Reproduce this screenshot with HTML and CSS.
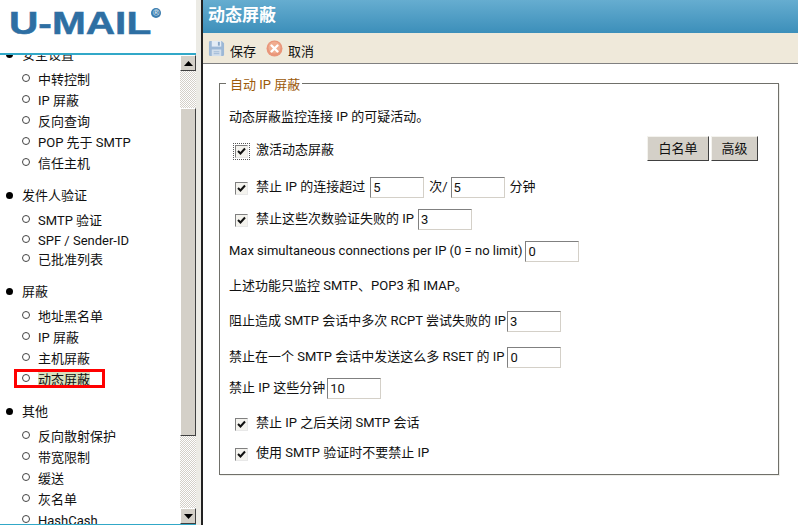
FILE: index.html
```html
<!DOCTYPE html>
<html lang="zh">
<head>
<meta charset="utf-8">
<title>动态屏蔽</title>
<link rel="stylesheet" href="styles.css">
</head>
<body>
<div class="app">
  <aside class="side">
    <div class="brand"><span class="logo">U-MAIL</span><span class="reg">®</span></div>
    <div class="navwrap">
      <div class="nav">
        <ul class="groups">
          <li class="group"><span class="gt">安全设置</span>
            <ul class="items">
              <li>中转控制</li><li>IP 屏蔽</li><li>反向查询</li><li>POP 先于 SMTP</li><li>信任主机</li>
            </ul>
          </li>
          <li class="group"><span class="gt">发件人验证</span>
            <ul class="items i20">
              <li>SMTP 验证</li><li>SPF / Sender-ID</li><li>已批准列表</li>
            </ul>
          </li>
          <li class="group"><span class="gt">屏蔽</span>
            <ul class="items">
              <li>地址黑名单</li><li>IP 屏蔽</li><li>主机屏蔽</li><li class="active"><span class="sel">动态屏蔽</span></li>
            </ul>
          </li>
          <li class="group"><span class="gt">其他</span>
            <ul class="items">
              <li>反向散射保护</li><li>带宽限制</li><li>缓送</li><li>灰名单</li><li>HashCash</li>
            </ul>
          </li>
        </ul>
      </div>
      <div class="sbar">
        <div class="sbtn"><svg width="9" height="5" viewBox="0 0 9 5"><path d="M4.500 0 9 5H0z"/></svg></div>
        <div class="strack t1"></div>
        <div class="sthumb"></div>
        <div class="strack t2"></div>
        <div class="sbtn"><svg width="9" height="5" viewBox="0 0 9 5"><path d="M0 0h9L4.500 5z"/></svg></div>
      </div>
    </div>
  </aside>
  <div class="split"></div>
  <main class="main">
    <header class="head">动态屏蔽</header>
    <div class="tools">
      <span class="tool"><svg class="ico" width="17" height="17" viewBox="0 0 18 18"><path d="M1 2.500A1.500 1.500 0 0 1 2.500 1h12L17 3.500v12a1.500 1.500 0 0 1-1.500 1.500h-13A1.500 1.500 0 0 1 1 15.500z" fill="#9db8d6"/><rect x="4" y="1" width="10" height="6" fill="#e4ecf5"/><rect x="10.500" y="2" width="2" height="4" fill="#8aa7c8"/><rect x="4" y="10" width="10" height="7" fill="#d3dfec"/><rect x="6" y="12" width="6" height="1" fill="#9db8d6"/><rect x="6" y="14" width="6" height="1" fill="#9db8d6"/></svg>保存</span>
      <span class="tool t2"><svg class="ico" width="17" height="17" viewBox="0 0 17 17"><circle cx="8.500" cy="8.500" r="8" fill="#e9967a"/><circle cx="8.500" cy="7.500" r="6" fill="#f0ad90"/><path d="M5.500 5.500l6 6M11.500 5.500l-6 6" stroke="#fff" stroke-width="2.400" stroke-linecap="round"/></svg>取消</span>
    </div>
    <div class="body">
      <fieldset class="box">
        <legend>自动 IP 屏蔽</legend>
        <p class="line intro">动态屏蔽监控连接 IP 的可疑活动。</p>
        <div class="line act">
          <label class="chk"><span class="cb focus"><svg width="9" height="9" viewBox="0 0 9 9"><path d="M1 4l2.500 2.500L8 1.500" fill="none" stroke="#111" stroke-width="2"/></svg></span>激活动态屏蔽</label>
          <span class="btns"><span class="btn b1">白名单</span><span class="btn b2">高级</span></span>
        </div>
        <div class="line l3"><label class="chk"><span class="cb"><svg width="9" height="9" viewBox="0 0 9 9"><path d="M1 4l2.500 2.500L8 1.500" fill="none" stroke="#111" stroke-width="2"/></svg></span>禁止 IP 的连接超过</label><span class="inp m5">5</span><span class="gap1">次/</span><span class="inp">5</span><span class="gap2">分钟</span></div>
        <div class="line l4"><label class="chk"><span class="cb"><svg width="9" height="9" viewBox="0 0 9 9"><path d="M1 4l2.500 2.500L8 1.500" fill="none" stroke="#111" stroke-width="2"/></svg></span>禁止这些次数验证失败的 IP</label><span class="inp m4">3</span></div>
        <div class="line l5">Max simultaneous connections per IP (0 = no limit)<span class="inp">0</span></div>
        <p class="line l6">上述功能只监控 SMTP、POP3 和 IMAP。</p>
        <div class="line l7">阻止造成 SMTP 会话中多次 RCPT 尝试失败的 IP<span class="inp m1">3</span></div>
        <div class="line l8">禁止在一个 SMTP 会话中发送这么多 RSET 的 IP<span class="inp">0</span></div>
        <div class="line l9">禁止 IP 这些分钟<span class="inp m2">10</span></div>
        <div class="line l10"><label class="chk"><span class="cb"><svg width="9" height="9" viewBox="0 0 9 9"><path d="M1 4l2.500 2.500L8 1.500" fill="none" stroke="#111" stroke-width="2"/></svg></span>禁止 IP 之后关闭 SMTP 会话</label></div>
        <div class="line l11"><label class="chk"><span class="cb"><svg width="9" height="9" viewBox="0 0 9 9"><path d="M1 4l2.500 2.500L8 1.500" fill="none" stroke="#111" stroke-width="2"/></svg></span>使用 SMTP 验证时不要禁止 IP</label></div>
      </fieldset>
    </div>
  </main>
</div>
</body>
</html>
```
FILE: styles.css
```css
*, *::before, *::after { box-sizing: border-box; }
html, body { margin: 0; height: 100%; overflow: hidden; background: #fff; }
body { font: 13px/16px Roboto, "Noto Sans CJK SC", sans-serif; color: #111; }
ul { list-style: none; margin: 0; padding: 0; }
p { margin: 0; }
.app { display: flex; width: 798px; height: 525px; }

.side { width: 196px; height: 525px; display: flex; flex-direction: column; flex: none; }
.brand { height: 55px; border-bottom: 2px solid #31a8c8; padding: 7px 0 0 9px; display: flex; align-items: flex-start; flex: none; background: #fff; position: relative; z-index: 1; }
.logo { font: bold 32px/32px "Liberation Sans", sans-serif; color: #2e6fa3; -webkit-text-stroke: 0.500px #2e6fa3; transform: scaleX(1.27); transform-origin: left; }
.reg { width: 10px; height: 10px; margin: 1px 0 0 30px; border-radius: 50%; background: #3b7cae; color: #d5e4ef; font: bold 9px/10px "Liberation Sans", sans-serif; text-align: center; }
.navwrap { flex: 1; display: flex; min-height: 0; border-bottom: 1px solid #31a8c8; }
.nav { flex: 1; overflow: hidden; background: #fff; }
.groups { margin-top: -8px; }
.group { padding-left: 22px; position: relative; margin-bottom: 11px; }
.group::before { content: ""; position: absolute; left: 6px; top: 4px; width: 7px; height: 7px; border-radius: 50%; background: #000; }
.gt { display: block; height: 16px; }
.items { margin-top: 9px; padding-left: 16px; }
.items li { height: 21px; position: relative; white-space: nowrap; }
.i20 { margin-bottom: 12.500px; }
.i20 li { height: 19.500px; }
.items li::before { content: ""; position: absolute; left: -16px; top: 2px; width: 8px; height: 8px; border: 1.500px solid #444; border-radius: 50%; background: #fff; }
.active::after { content: ""; position: absolute; left: -24px; top: -3px; width: 91px; height: 19px; border: 3px solid #f00; }
.sel { background: #d8e2c0; }

.sbar { width: 16px; flex: none; display: flex; flex-direction: column; background: #fff; }
.sbtn { height: 16px; background: #d4d0c8; border: 1px solid; border-color: #fff #404040 #404040 #fff; display: flex; align-items: center; justify-content: center; flex: none; }
.strack { background: repeating-conic-gradient(#d4d0c8 0 25%, #fff 0 50%) 0 0/2px 2px; }
.t1 { height: 37px; flex: none; }
.t2 { flex: 1; }
.sthumb { height: 328px; flex: none; background: #d4d0c8; border: 1px solid; border-color: #fff #404040 #404040 #fff; }

.split { width: 7px; flex: none; background: #ecebe5; border-right: 2px solid #222; }

.main { flex: 1; display: flex; flex-direction: column; min-width: 0; }
.head { height: 33px; background: linear-gradient(#66add0, #3c8fba); color: #fff; font-size: 17px; font-weight: 700; line-height: 31px; padding-left: 5px; flex: none; }
.tools { height: 31px; background: #efe9da; border-bottom: 1px solid #808080; display: flex; align-items: center; padding: 8px 0 0 5px; flex: none; }
.tool { display: flex; align-items: flex-start; gap: 5px; }
.ico { margin-top: -4px; }
.tool.t2 { margin-left: 10px; }
.body { padding: 10px 19px 0 16px; }
.box { margin: 0; height: 401px; border: 1px solid #70706a; box-shadow: 1px 1px 0 #eeeeea; padding: 0 0 0 9px; min-width: 0; }
legend { color: #9c5a0a; padding: 3px 2px 0 4px; margin-left: -3px; line-height: 16px; }
.line { display: flex; align-items: center; height: 22px; white-space: nowrap; }
.chk { display: flex; align-items: center; margin-left: 6px; }
.cb { width: 13px; height: 13px; margin: 2px 8px 0 0; background: #f4f3ee; border: 1px solid; border-color: #808080 #e8e8e8 #e8e8e8 #808080; display: flex; align-items: center; justify-content: center; flex: none; }
.cb.focus { outline: 1px dotted #555; outline-offset: 1px; }
.inp { display: block; width: 54px; height: 21px; line-height: 17px; margin-left: 3px; background: #fff; border: 1px solid; border-color: #808080 #d4d0c8 #d4d0c8 #808080; padding: 1px 0 0 2px; }
.inp.m5 { margin-left: 5px; }
.inp.m4 { margin-left: 4px; }
.inp.m2 { margin-left: 2px; }
.inp.m1 { margin-left: 1px; }
.gap1 { margin-left: 5px; }
.gap2 { margin-left: 5px; }
.intro { margin-top: 13px; }
.act { margin-top: 11px; justify-content: space-between; padding-right: 20px; }
.btns { display: flex; margin-top: -3px; gap: 2px; }
.btn { height: 25px; display: flex; align-items: center; justify-content: center; background: #d4d0c8; border: 1px solid; border-color: #f4f3ee #404040 #404040 #f4f3ee; }
.b1 { width: 62px; }
.b2 { width: 47px; }
.l3 { margin-top: 15px; }
.l4 { margin-top: 10px; }
.l5 { margin-top: 10px; }
.l6 { margin-top: 13px; }
.l7 { margin-top: 13px; }
.l8 { margin-top: 14px; }
.l9 { margin-top: 9px; }
.l10 { margin-top: 13px; }
.l11 { margin-top: 8px; }
```
